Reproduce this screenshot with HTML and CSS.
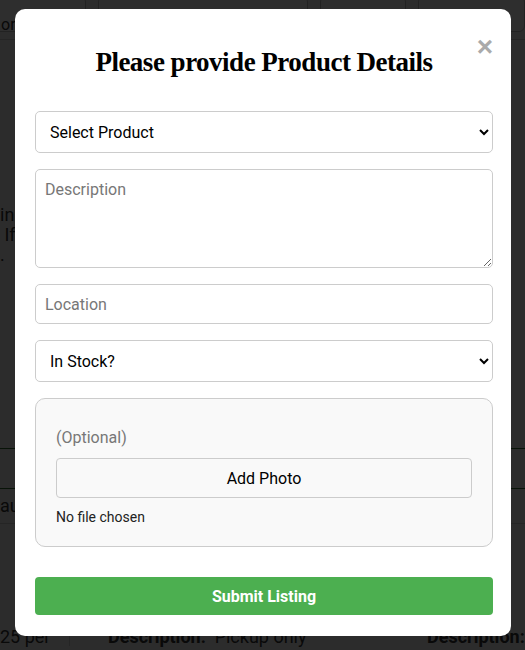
FILE: index.html
```html
<!DOCTYPE html>
<html>
<head>
<meta charset="utf-8">
<link rel="stylesheet" href="styles.css">
</head>
<body>
<div class="page">
  <div class="toolbar">
    <div class="tb tb1"><span>or</span></div>
    <div class="tb tb2"></div>
    <div class="tb tb3"></div>
    <div class="tb tb4"></div>
  </div>
  <div class="rows">
    <div class="row r1">
      <div class="cell c1"><p class="bgtext t1">ini<br>&nbsp;If<br>.</p></div>
      <div class="cell c2"></div>
      <div class="cell c3"><p class="bgtext t2">$</p></div>
    </div>
    <div class="row r2">
      <div class="cell c1"></div>
      <div class="cell c2"></div>
      <div class="cell c3"><p class="bgtext t3">Se</p></div>
    </div>
    <div class="row r2b">
      <div class="cell c1"><p class="bgtext t4">aut</p></div>
      <div class="cell c2"></div>
      <div class="cell c3"></div>
    </div>
    <div class="row r3">
      <div class="cell c1"><p class="bgtext">25 per</p></div>
      <div class="cell c2"><p class="bgtext t5"><b>Description:</b>&nbsp; Pickup only</p></div>
      <div class="cell c3"><p class="bgtext t6"><b>Description:</b></p></div>
    </div>
  </div>
</div>
<div class="overlay">
  <div class="modal">
    <span class="close">&times;</span>
    <h2 class="title">Please provide Product Details</h2>
    <form class="form">
      <select class="field select"><option>Select Product</option></select>
      <textarea class="field textarea" placeholder="Description"></textarea>
      <input class="field input" type="text" placeholder="Location">
      <select class="field select"><option>In Stock?</option></select>
      <div class="photo">
        <span class="optional">(Optional)</span>
        <button type="button" class="add">Add Photo</button>
        <span class="nofile">No file chosen</span>
      </div>
      <button type="button" class="submit">Submit Listing</button>
    </form>
  </div>
</div>
</body>
</html>
```
FILE: styles.css
```css
* { box-sizing: border-box; }
html, body { margin: 0; padding: 0; }
body {
  width: 525px;
  height: 650px;
  overflow: hidden;
  font-family: Roboto, "Liberation Sans", sans-serif;
  background: #fff;
}
.page { width: 525px; height: 650px; background: #f4f4f4; overflow: hidden; }
.toolbar {
  display: flex;
  gap: 12px;
  height: 40px;
  padding: 4px 0 4px 0;
  border-bottom: 1px solid #ccc;
  margin-left: -10px;
}
.tb { border: 1px solid #bbb; border-radius: 6px; background: #fff; height: 36px; margin-top: -8px; padding-top: 18px; font-size: 16px; color: #333; }
.tb1 { width: 98px; padding-left: 10px; }
.tb2 { width: 217px; }
.tb3 { width: 88px; }
.tb4 { width: 110px; }
.rows { display: flex; flex-direction: column; }
.row { display: flex; border-bottom: 1px solid #ccc; }
.r1 { height: 409px; border-bottom: 1px solid #2e6b2e; }
.r2 { height: 40px; border-bottom: 1px solid #2e6b2e; }
.r2b { height: 35px; }
.r3 { height: 122px; border-bottom: none; }
.cell { font-size: 16px; color: #333; }
.c1 { width: 70px; border-right: 1px solid #ccc; }
.c2 { flex: 1; padding-left: 38px; }
.c3 { width: 100px; padding-left: 2px; }
.bgtext { margin: 0; }
.t1 { padding-top: 165px; font-size: 18px; line-height: 20px; }
.t2 { padding-top: 100px; font-size: 18px; }
.t3 { padding-top: 8px; font-size: 18px; }
.t4 { padding-top: 6px; font-size: 18px; }
.r3 .bgtext { padding-top: 103px; font-size: 18px; line-height: 19px; white-space: nowrap; }
.overlay {
  position: fixed;
  inset: 0;
  background: rgba(0, 0, 0, 0.82);
  display: flex;
  justify-content: flex-start;
  align-items: flex-start;
  padding: 9px 0 0 15px;
}
.modal {
  position: relative;
  width: 496px;
  background: #fff;
  border-radius: 10px;
  padding: 20px 18px 21px 20px;
}
.close {
  position: absolute;
  top: 24px;
  right: 18px;
  font-size: 28px;
  line-height: 28px;
  font-weight: bold;
  color: #aaa;
  font-family: "Liberation Sans", Arial, sans-serif;
}
.title {
  margin: 10px 0 26px;
  text-align: center;
  font-family: "Liberation Serif", "Times New Roman", serif;
  font-weight: bold;
  font-size: 27px;
  line-height: 46px;
  color: #000;
  letter-spacing: -0.5px;
}
.form { display: flex; flex-direction: column; gap: 16px; }
.field {
  width: 100%;
  border: 1px solid #ccc;
  border-radius: 5px;
  font-family: Roboto, "Liberation Sans", sans-serif;
  font-size: 16px;
  color: #000;
  background: #fff;
  margin: 0;
}
.field::placeholder { color: #777; }
.select {
  height: 42px;
  padding: 0 10px;
  appearance: auto;
}
.textarea {
  height: 99px;
  padding: 10px 9px;
  resize: vertical;
  display: block;
}
.input { height: 40px; padding: 0 9px; }
.photo {
  background: #f9f9f9;
  border: 1px solid #ccc;
  border-radius: 10px;
  padding: 29px 20px 20px;
  display: flex;
  flex-direction: column;
  align-items: stretch;
}
.optional { color: #777; font-size: 16px; line-height: 20px; }
.add {
  margin-top: 10px;
  height: 40px;
  background: #f9f9f9;
  border: 1px solid #ccc;
  border-radius: 4px;
  font-family: Roboto, "Liberation Sans", sans-serif;
  font-size: 16px;
  color: #000;
}
.nofile { margin-top: 10px; font-size: 14px; line-height: 18px; color: #222; }
.submit {
  margin-top: 14px;
  height: 38px;
  background: #4caf50;
  border: none;
  border-radius: 4px;
  color: #fff;
  font-family: Roboto, "Liberation Sans", sans-serif;
  font-weight: bold;
  font-size: 16px;
}
```
